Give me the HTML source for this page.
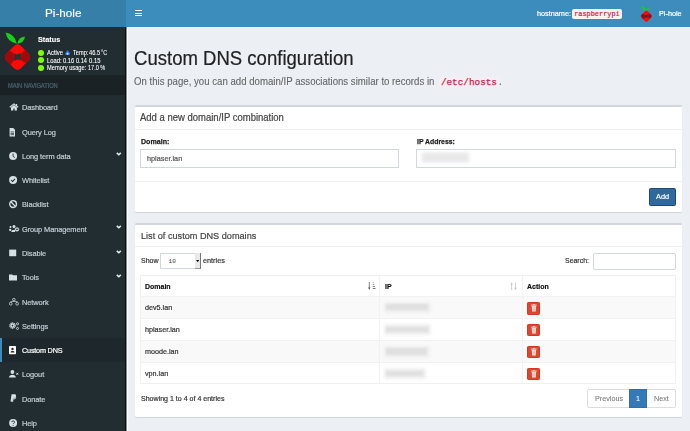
<!DOCTYPE html>
<html><head><meta charset="utf-8"><title>Custom DNS configuration</title>
<style>
html,body{margin:0;padding:0;width:690px;height:431px;overflow:hidden;background:#ecf0f5}
body{position:relative;font-family:"Liberation Sans",sans-serif}
.t{position:absolute;white-space:nowrap;-webkit-text-stroke:0.2px currentColor}
.r{position:absolute;display:block}
</style></head><body>
<div class="r" style="left:0.00px;top:0.00px;width:690.00px;height:431.00px;background:#ecf0f5;"></div>
<div class="r" style="left:0.00px;top:0.00px;width:126.00px;height:27.00px;background:#367fa9;"></div>
<div class="r" style="left:126.00px;top:0.00px;width:564.00px;height:27.00px;background:#3c8dbc;"></div>
<div class="t" style="left:44.60px;top:7.60px;font-size:10.6px;line-height:10.6px;color:#fff;transform:scaleX(1.1050);transform-origin:0 0;-webkit-text-stroke:0.15px currentColor;">Pi-hole</div>
<div class="r" style="left:134.80px;top:10.00px;width:7.40px;height:1.20px;background:#fff;"></div>
<div class="r" style="left:134.80px;top:12.60px;width:7.40px;height:1.20px;background:#fff;"></div>
<div class="r" style="left:134.80px;top:15.20px;width:7.40px;height:1.20px;background:#fff;"></div>
<div class="t" style="left:536.60px;top:9.83px;font-size:7.738px;line-height:7.738px;color:#fff;transform:scaleX(0.9434);transform-origin:0 0;">hostname:</div>
<div class="r" style="left:572.20px;top:9.30px;width:50.10px;height:9.30px;background:#f9f2f4;border-radius:2px;"></div>
<div class="t" style="left:574.20px;top:10.75px;font-size:6.9px;line-height:6.9px;color:#c7254e;font-family:'Liberation Mono', monospace;-webkit-text-stroke:0.2px currentColor;">raspberrypi</div>
<svg class="r" style="left:639.2px;top:4.3px;width:14.28px;height:18.48px" viewBox="0 0 34 44">
<path d="M5.6 4.6 Q 15.1 6.3 16.8 15.8 Q 7.3 14.1 5.6 4.6 Z" fill="#19cf19"/>
<path d="M25.0 8.5 Q 24.1 15.2 17.4 15.8 Q 18.3 9.1 25.0 8.5 Z" fill="#19cf19"/>
<rect x="7.27" y="18.87" width="20.46" height="20.46" rx="4.6" transform="rotate(45 17.5 29.1)" fill="#ff0808"/>
<clipPath id="cp639"><rect x="7.27" y="18.87" width="20.46" height="20.46" rx="4.6" transform="rotate(45 17.5 29.1)"/></clipPath>
<g clip-path="url(#cp639)">
<circle cx="9.0" cy="29.6" r="6.6" fill="#a00a0a"/>
<circle cx="26.0" cy="28.6" r="6.2" fill="#a00a0a"/>
<circle cx="17.5" cy="21.0" r="6.4" fill="#ff0808"/>
<circle cx="17.8" cy="37.4" r="6.4" fill="#ff0808"/>
<path d="M13.4 24.8 Q 17.5 28.0 21.6 24.6 Q 18.6 28.8 21.8 33.0 Q 17.6 29.8 13.6 33.4 Q 16.6 29.0 13.4 24.8 Z" fill="#263236"/>
</g></svg>
<div class="t" style="left:658.60px;top:9.83px;font-size:7.738px;line-height:7.738px;color:#fff;transform:scaleX(0.9434);transform-origin:0 0;">Pi-hole</div>
<div class="r" style="left:0.00px;top:27.00px;width:125.00px;height:404.00px;background:#222d32;"></div>
<div class="r" style="left:125.00px;top:27.00px;width:1.00px;height:404.00px;background:#0b0f11;"></div>
<div class="r" style="left:126.00px;top:27.00px;width:1.00px;height:404.00px;background:#858a8e;"></div>
<div class="r" style="left:127.00px;top:27.00px;width:1.00px;height:404.00px;background:#fbfcfd;"></div>
<svg class="r" style="left:0px;top:28px;width:34.0px;height:44.0px" viewBox="0 0 34 44">
<path d="M5.6 4.6 Q 15.1 6.3 16.8 15.8 Q 7.3 14.1 5.6 4.6 Z" fill="#19cf19"/>
<path d="M25.0 8.5 Q 24.1 15.2 17.4 15.8 Q 18.3 9.1 25.0 8.5 Z" fill="#19cf19"/>
<rect x="7.27" y="18.87" width="20.46" height="20.46" rx="4.6" transform="rotate(45 17.5 29.1)" fill="#ff0808"/>
<clipPath id="cp0"><rect x="7.27" y="18.87" width="20.46" height="20.46" rx="4.6" transform="rotate(45 17.5 29.1)"/></clipPath>
<g clip-path="url(#cp0)">
<circle cx="9.0" cy="29.6" r="6.6" fill="#a00a0a"/>
<circle cx="26.0" cy="28.6" r="6.2" fill="#a00a0a"/>
<circle cx="17.5" cy="21.0" r="6.4" fill="#ff0808"/>
<circle cx="17.8" cy="37.4" r="6.4" fill="#ff0808"/>
<path d="M13.4 24.8 Q 17.5 28.0 21.6 24.6 Q 18.6 28.8 21.8 33.0 Q 17.6 29.8 13.6 33.4 Q 16.6 29.0 13.4 24.8 Z" fill="#263236"/>
</g></svg>
<div class="t" style="left:37.60px;top:35.85px;font-size:8.1px;line-height:8.1px;color:#fff;font-weight:700;transform:scaleX(0.9029);transform-origin:0 0;-webkit-text-stroke:0.1px currentColor;">Status</div>
<div class="r" style="left:38.2px;top:49.80px;width:6.2px;height:6.2px;border-radius:50%;background:#7fff00"></div>
<div class="r" style="left:38.2px;top:57.20px;width:6.2px;height:6.2px;border-radius:50%;background:#7fff00"></div>
<div class="r" style="left:38.2px;top:64.70px;width:6.2px;height:6.2px;border-radius:50%;background:#7fff00"></div>
<svg class="r" style="left:64.8px;top:50.0px;width:5.2px;height:5.4px" viewBox="0 0 5.2 5.4"><path d="M2.6 0.2 C 3.6 1.6, 5 2.6, 5 3.6 A 2.4 1.9 0 0 1 0.2 3.6 C 0.2 2.6, 1.4 1.8, 2.6 0.2 Z" fill="#2e7bef"/><circle cx="2.6" cy="3.8" r="1.0" fill="#cfe2ff"/></svg>
<div class="t" style="left:46.80px;top:49.40px;font-size:7.0px;line-height:7.0px;color:#fff;transform:scaleX(0.8425);transform-origin:0 0;-webkit-text-stroke:0.08px currentColor;">Active</div>
<div class="t" style="left:72.90px;top:49.40px;font-size:7.0px;line-height:7.0px;color:#fff;transform:scaleX(0.8058);transform-origin:0 0;-webkit-text-stroke:0.08px currentColor;">Temp:</div>
<div class="t" style="left:89.00px;top:49.40px;font-size:7.0px;line-height:7.0px;color:#fff;transform:scaleX(0.8117);transform-origin:0 0;-webkit-text-stroke:0.08px currentColor;">46.5</div>
<div class="t" style="left:101.20px;top:49.40px;font-size:7.0px;line-height:7.0px;color:#fff;transform:scaleX(0.7838);transform-origin:0 0;-webkit-text-stroke:0.08px currentColor;">°C</div>
<div class="t" style="left:46.80px;top:56.80px;font-size:7.0px;line-height:7.0px;color:#fff;transform:scaleX(0.8362);transform-origin:0 0;-webkit-text-stroke:0.08px currentColor;">Load:</div>
<div class="t" style="left:63.30px;top:56.80px;font-size:7.0px;line-height:7.0px;color:#fff;transform:scaleX(0.8191);transform-origin:0 0;-webkit-text-stroke:0.08px currentColor;">0.16</div>
<div class="t" style="left:76.40px;top:56.80px;font-size:7.0px;line-height:7.0px;color:#fff;transform:scaleX(0.7971);transform-origin:0 0;-webkit-text-stroke:0.08px currentColor;">0.14</div>
<div class="t" style="left:89.10px;top:56.80px;font-size:7.0px;line-height:7.0px;color:#fff;transform:scaleX(0.8411);transform-origin:0 0;-webkit-text-stroke:0.08px currentColor;">0.15</div>
<div class="t" style="left:46.80px;top:64.30px;font-size:7.0px;line-height:7.0px;color:#fff;transform:scaleX(0.8137);transform-origin:0 0;-webkit-text-stroke:0.08px currentColor;">Memory usage:</div>
<div class="t" style="left:87.70px;top:64.30px;font-size:7.0px;line-height:7.0px;color:#fff;transform:scaleX(0.7873);transform-origin:0 0;-webkit-text-stroke:0.08px currentColor;">17.0 %</div>
<div class="r" style="left:0.00px;top:75.00px;width:125.00px;height:19.60px;background:#1a2226;"></div>
<div class="t" style="left:7.60px;top:82.80px;font-size:6.6px;line-height:6.6px;color:#4b646f;letter-spacing:-0.1px;transform:scaleX(0.8800);transform-origin:0 0;">MAIN NAVIGATION</div>
<div class="t" style="left:21.60px;top:104.40px;font-size:7.9px;line-height:7.9px;color:#bfcdd3;letter-spacing:-0.1px;transform:scaleX(0.9400);transform-origin:0 0;">Dashboard</div>
<div class="t" style="left:21.60px;top:128.67px;font-size:7.9px;line-height:7.9px;color:#bfcdd3;letter-spacing:-0.1px;transform:scaleX(0.9400);transform-origin:0 0;">Query Log</div>
<div class="t" style="left:21.60px;top:152.94px;font-size:7.9px;line-height:7.9px;color:#bfcdd3;letter-spacing:-0.1px;transform:scaleX(0.9400);transform-origin:0 0;">Long term data</div>
<svg class="r" style="left:116.0px;top:152.44px;width:5.6px;height:4px" viewBox="0 0 5.6 4"><path d="M0.8 0.9 L2.8 2.8 L4.8 0.9" stroke="#e6edf0" stroke-width="1.5" fill="none"/></svg>
<div class="t" style="left:21.60px;top:177.21px;font-size:7.9px;line-height:7.9px;color:#bfcdd3;letter-spacing:-0.1px;transform:scaleX(0.9400);transform-origin:0 0;">Whitelist</div>
<div class="t" style="left:21.60px;top:201.48px;font-size:7.9px;line-height:7.9px;color:#bfcdd3;letter-spacing:-0.1px;transform:scaleX(0.9400);transform-origin:0 0;">Blacklist</div>
<div class="t" style="left:21.60px;top:225.75px;font-size:7.9px;line-height:7.9px;color:#bfcdd3;letter-spacing:-0.1px;transform:scaleX(0.9400);transform-origin:0 0;">Group Management</div>
<svg class="r" style="left:116.0px;top:225.25px;width:5.6px;height:4px" viewBox="0 0 5.6 4"><path d="M0.8 0.9 L2.8 2.8 L4.8 0.9" stroke="#e6edf0" stroke-width="1.5" fill="none"/></svg>
<div class="t" style="left:21.60px;top:250.02px;font-size:7.9px;line-height:7.9px;color:#bfcdd3;letter-spacing:-0.1px;transform:scaleX(0.9400);transform-origin:0 0;">Disable</div>
<svg class="r" style="left:116.0px;top:249.52000000000004px;width:5.6px;height:4px" viewBox="0 0 5.6 4"><path d="M0.8 0.9 L2.8 2.8 L4.8 0.9" stroke="#e6edf0" stroke-width="1.5" fill="none"/></svg>
<div class="t" style="left:21.60px;top:274.29px;font-size:7.9px;line-height:7.9px;color:#bfcdd3;letter-spacing:-0.1px;transform:scaleX(0.9400);transform-origin:0 0;">Tools</div>
<svg class="r" style="left:116.0px;top:273.79px;width:5.6px;height:4px" viewBox="0 0 5.6 4"><path d="M0.8 0.9 L2.8 2.8 L4.8 0.9" stroke="#e6edf0" stroke-width="1.5" fill="none"/></svg>
<div class="t" style="left:21.60px;top:298.56px;font-size:7.9px;line-height:7.9px;color:#bfcdd3;letter-spacing:-0.1px;transform:scaleX(0.9400);transform-origin:0 0;">Network</div>
<div class="t" style="left:21.60px;top:322.83px;font-size:7.9px;line-height:7.9px;color:#bfcdd3;letter-spacing:-0.1px;transform:scaleX(0.9400);transform-origin:0 0;">Settings</div>
<div class="r" style="left:0.00px;top:338.20px;width:125.00px;height:24.27px;background:#1e282c;"></div>
<div class="r" style="left:0.00px;top:338.20px;width:2.00px;height:24.27px;background:#3c8dbc;"></div>
<div class="t" style="left:21.60px;top:347.10px;font-size:7.9px;line-height:7.9px;color:#fff;letter-spacing:-0.22px;transform:scaleX(0.9200);transform-origin:0 0;">Custom DNS</div>
<div class="t" style="left:21.60px;top:371.37px;font-size:7.9px;line-height:7.9px;color:#bfcdd3;letter-spacing:-0.1px;transform:scaleX(0.9400);transform-origin:0 0;">Logout</div>
<div class="t" style="left:21.60px;top:395.64px;font-size:7.9px;line-height:7.9px;color:#bfcdd3;letter-spacing:-0.1px;transform:scaleX(0.9400);transform-origin:0 0;">Donate</div>
<div class="t" style="left:21.60px;top:419.91px;font-size:7.9px;line-height:7.9px;color:#bfcdd3;letter-spacing:-0.1px;transform:scaleX(0.9400);transform-origin:0 0;">Help</div>
<svg class="r" style="left:8.8px;top:103.3px;width:10px;height:9px" viewBox="0 0 10 9"><path d="M0.8 4.3 L4.95 0.9 L9.1 4.3" stroke="#d6e0e5" stroke-width="1.1" fill="none"/><rect x="7.0" y="1.0" width="1.1" height="2.2" fill="#d6e0e5"/><path d="M2.0 4.5 L4.95 2.1 L7.9 4.5 V7.4 H5.6 V5.5 H4.3 V7.4 H2.0 Z" fill="#d6e0e5"/></svg>
<svg class="r" style="left:9.2px;top:127.67px;width:10px;height:9px" viewBox="0 0 10 9"><path d="M0.6 0 H4.2 L6 1.8 V8.4 H0.6 Z" fill="#d6e0e5"/><rect x="1.6" y="3.6" width="3.4" height="0.7" fill="#222d32"/><rect x="1.6" y="5.0" width="3.4" height="0.7" fill="#222d32"/><rect x="1.6" y="6.4" width="3.4" height="0.7" fill="#222d32"/></svg>
<svg class="r" style="left:9.0px;top:151.74px;width:10px;height:9px" viewBox="0 0 10 9"><circle cx="4.1" cy="4.1" r="4.0" fill="#d6e0e5"/><path d="M4.1 1.6 V4.3 L5.8 5.6" stroke="#222d32" stroke-width="0.9" fill="none"/></svg>
<svg class="r" style="left:9.0px;top:176.01000000000002px;width:10px;height:9px" viewBox="0 0 10 9"><circle cx="4.1" cy="4.1" r="4.0" fill="#d6e0e5"/><path d="M2.2 4.2 L3.6 5.5 L6.0 2.9" stroke="#222d32" stroke-width="1.1" fill="none"/></svg>
<svg class="r" style="left:9.0px;top:200.28000000000003px;width:10px;height:9px" viewBox="0 0 10 9"><circle cx="4.1" cy="4.1" r="3.4" stroke="#d6e0e5" stroke-width="1.3" fill="none"/><path d="M1.8 1.8 L6.4 6.4" stroke="#d6e0e5" stroke-width="1.3"/></svg>
<svg class="r" style="left:9.0px;top:224.95px;width:11px;height:8px" viewBox="0 0 11 8"><circle cx="1.5" cy="2.0" r="1.0" fill="#d6e0e5"/><ellipse cx="1.2" cy="4.9" rx="1.2" ry="1.1" fill="#d6e0e5"/><circle cx="5.0" cy="1.5" r="1.5" fill="#d6e0e5"/><path d="M2.2 7.0 C2.4 4.6 5.6 4.2 6.4 5.2 L6.0 7.0 Z" fill="#d6e0e5"/><circle cx="8.0" cy="4.4" r="1.35" fill="none" stroke="#d6e0e5" stroke-width="1.1"/><circle cx="8.0" cy="4.4" r="2.0" fill="none" stroke="#d6e0e5" stroke-width="0.5" stroke-dasharray="0.6 0.45"/></svg>
<svg class="r" style="left:9.0px;top:249.02000000000004px;width:10px;height:9px" viewBox="0 0 10 9"><rect x="0.2" y="0.6" width="7" height="6.6" fill="#d6e0e5"/></svg>
<svg class="r" style="left:9.0px;top:273.99px;width:10px;height:9px" viewBox="0 0 10 9"><path d="M0 0.4 H3.2 L4.0 1.2 H8 V6.4 H0 Z" fill="#d6e0e5"/></svg>
<svg class="r" style="left:9.0px;top:298.06px;width:10px;height:8px" viewBox="0 0 10 8"><rect x="3.7" y="0.5" width="2.4" height="2.2" rx="0.6" stroke="#d6e0e5" stroke-width="0.8" fill="none"/><rect x="0.5" y="4.4" width="2.5" height="2.6" rx="0.9" stroke="#d6e0e5" stroke-width="0.8" fill="none"/><rect x="6.9" y="4.4" width="2.5" height="2.6" rx="0.9" stroke="#d6e0e5" stroke-width="0.8" fill="none"/><path d="M4.9 2.7 V3.5 M1.75 4.4 V3.5 H8.15 V4.4" stroke="#d6e0e5" stroke-width="0.6" fill="none"/></svg>
<svg class="r" style="left:9.0px;top:322.03px;width:10px;height:8px" viewBox="0 0 10 8"><circle cx="3.5" cy="3.6" r="2.6" fill="none" stroke="#d6e0e5" stroke-width="1.3" stroke-dasharray="1.15 0.5"/><circle cx="3.5" cy="3.6" r="2.1" fill="#d6e0e5"/><circle cx="3.5" cy="3.6" r="0.85" fill="#222d32"/><circle cx="8.5" cy="1.8" r="1.05" fill="none" stroke="#d6e0e5" stroke-width="0.85"/><circle cx="8.5" cy="6.4" r="1.05" fill="none" stroke="#d6e0e5" stroke-width="0.85"/></svg>
<svg class="r" style="left:9.0px;top:345.49999999999994px;width:10px;height:9px" viewBox="0 0 10 9"><rect x="0" y="0" width="7" height="8.2" rx="0.8" fill="#fff"/><circle cx="3.5" cy="3" r="1.2" fill="#1e282c"/><path d="M1.5 6.4 C1.6 4.6 5.4 4.6 5.5 6.4 Z" fill="#1e282c"/></svg>
<svg class="r" style="left:9.0px;top:370.36999999999995px;width:10px;height:8px" viewBox="0 0 10 8"><circle cx="3.4" cy="2.0" r="1.9" fill="#d6e0e5"/><path d="M0 7.6 C0 3.9 6.8 3.9 6.8 7.6 Z" fill="#d6e0e5"/><path d="M7.3 2.8 L9.3 4.8 M9.3 2.8 L7.3 4.8" stroke="#d6e0e5" stroke-width="0.9"/></svg>
<svg class="r" style="left:9.6px;top:394.34000000000003px;width:8px;height:9px" viewBox="0 0 8 9"><path d="M1.6 0.2 H4.6 C6.4 0.2 6.6 2.6 5 3.6 C4.4 4 3.6 4 3.0 4 L2.5 7.6 H0.5 Z" fill="#d6e0e5"/><path d="M2.6 2 H4.6 C6.8 2 6.8 5.4 4.2 5.4 H3.5 L3.1 8 H1.6" fill="#d6e0e5" opacity="0.75"/></svg>
<svg class="r" style="left:9.0px;top:418.71000000000004px;width:10px;height:9px" viewBox="0 0 10 9"><circle cx="4.1" cy="4.1" r="4.0" fill="#d6e0e5"/><path d="M2.7 3.1 C2.7 1.5 5.6 1.5 5.6 3.1 C5.6 4.2 4.1 4.1 4.1 5.1" stroke="#222d32" stroke-width="0.9" fill="none"/><circle cx="4.1" cy="6.4" r="0.5" fill="#222d32"/></svg>
<div class="t" style="left:134.30px;top:48.87px;font-size:19.663px;line-height:19.663px;color:#222;transform:scaleX(0.9434);transform-origin:0 0;">Custom DNS configuration</div>
<div class="t" style="left:134.40px;top:77.29px;font-size:10.229px;line-height:10.229px;color:#666;transform:scaleX(0.9434);transform-origin:0 0;-webkit-text-stroke:0.1px currentColor;">On this page, you can add domain/IP associations similar to records in</div>
<div class="r" style="left:439.30px;top:76.60px;width:59.30px;height:10.60px;background:#f5eef2;border-radius:2px;"></div>
<div class="t" style="left:440.90px;top:77.92px;font-size:9.35px;line-height:9.35px;color:#c7254e;font-family:'Liberation Mono', monospace;-webkit-text-stroke:0.25px currentColor;">/etc/hosts</div>
<div class="t" style="left:499.30px;top:77.29px;font-size:10.229px;line-height:10.229px;color:#666;transform:scaleX(0.9434);transform-origin:0 0;">.</div>
<div class="r" style="left:134.70px;top:105.00px;width:547.00px;height:106.50px;background:#fff;box-shadow:0 0.6px 0.8px rgba(0,0,0,0.12);border-radius:1.5px;"></div>
<div class="r" style="left:134.70px;top:105.00px;width:547.00px;height:2.00px;background:#d2d6de;border-radius:1.5px 1.5px 0 0;"></div>
<div class="t" style="left:140.20px;top:113.17px;font-size:10.07px;line-height:10.07px;color:#444;transform:scaleX(0.9434);transform-origin:0 0;">Add a new domain/IP combination</div>
<div class="r" style="left:134.70px;top:128.80px;width:547.00px;height:0.80px;background:#f0f0f0;"></div>
<div class="t" style="left:140.90px;top:138.14px;font-size:7.526px;line-height:7.526px;color:#222;font-weight:700;transform:scaleX(0.9434);transform-origin:0 0;-webkit-text-stroke:0.25px currentColor;">Domain:</div>
<div class="r" style="left:140.20px;top:149.10px;width:259.10px;height:18.60px;background:#fff;box-sizing:border-box;border:0.8px solid #d2d6de;"></div>
<div class="t" style="left:147.40px;top:154.93px;font-size:7.738px;line-height:7.738px;color:#555;transform:scaleX(0.9434);transform-origin:0 0;">hplaser.lan</div>
<div class="t" style="left:416.60px;top:138.24px;font-size:7.314px;line-height:7.314px;color:#222;font-weight:700;transform:scaleX(0.9434);transform-origin:0 0;-webkit-text-stroke:0.25px currentColor;">IP Address:</div>
<div class="r" style="left:416.40px;top:149.10px;width:259.60px;height:18.60px;background:#fff;box-sizing:border-box;border:0.8px solid #d2d6de;"></div>
<div class="r" style="left:421.00px;top:151.60px;width:48.50px;height:11.40px;background:#f0f0f0;filter:blur(1.5px);border-radius:3px;"></div>
<div class="r" style="left:423.50px;top:154.00px;width:43.00px;height:6.50px;background:#e8e8e8;filter:blur(1.0px);"></div>
<div class="r" style="left:134.70px;top:181.00px;width:547.00px;height:0.80px;background:#f0f0f0;"></div>
<div class="r" style="left:649.30px;top:187.70px;width:26.70px;height:18.20px;background:#2e6a9f;box-sizing:border-box;border:0.8px solid #1f4a70;border-radius:1.5px;"></div>
<div class="t" style="left:655.80px;top:193.48px;font-size:7.844px;line-height:7.844px;color:#fff;transform:scaleX(0.9434);transform-origin:0 0;">Add</div>
<div class="r" style="left:134.70px;top:222.50px;width:547.00px;height:194.00px;background:#fff;box-shadow:0 0.6px 0.8px rgba(0,0,0,0.12);border-radius:1.5px;"></div>
<div class="r" style="left:134.70px;top:222.50px;width:547.00px;height:2.00px;background:#d2d6de;border-radius:1.5px 1.5px 0 0;"></div>
<div class="t" style="left:140.50px;top:230.55px;font-size:9.699px;line-height:9.699px;color:#444;transform:scaleX(0.9434);transform-origin:0 0;">List of custom DNS domains</div>
<div class="r" style="left:134.70px;top:246.00px;width:547.00px;height:0.80px;background:#f0f0f0;"></div>
<div class="t" style="left:140.50px;top:257.39px;font-size:7.42px;line-height:7.42px;color:#333;transform:scaleX(0.9434);transform-origin:0 0;">Show</div>
<div class="r" style="left:160.20px;top:252.70px;width:40.40px;height:16.30px;background:#fff;box-sizing:border-box;border:0.8px solid #d2d6de;"></div>
<div class="r" style="left:195.00px;top:253.30px;width:5.60px;height:15.70px;background:#e9e9e9;box-sizing:border-box;border-right:0.8px solid #777;border-bottom:0.8px solid #999;"></div>
<svg class="r" style="left:196.0px;top:259.6px;width:3.4px;height:2.4px" viewBox="0 0 3.4 2.4"><path d="M0 0 H3.4 L1.7 2.2 Z" fill="#111"/></svg>
<div class="t" style="left:168.60px;top:259.35px;font-size:6.1px;line-height:6.1px;color:#3a3a3a;font-family:'Liberation Mono', monospace;-webkit-text-stroke:0;">10</div>
<div class="t" style="left:202.50px;top:257.23px;font-size:7.738px;line-height:7.738px;color:#333;transform:scaleX(0.9434);transform-origin:0 0;">entries</div>
<div class="t" style="left:565.10px;top:257.32px;font-size:7.367px;line-height:7.367px;color:#333;transform:scaleX(0.9434);transform-origin:0 0;">Search:</div>
<div class="r" style="left:592.70px;top:252.50px;width:83.30px;height:17.00px;background:#fff;box-sizing:border-box;border:0.8px solid #d2d6de;border-radius:2px;"></div>
<div class="r" style="left:140.20px;top:275.20px;width:535.60px;height:109.00px;background:#fff;box-sizing:border-box;border:0.8px solid #f0f0f0;"></div>
<div class="r" style="left:141.00px;top:296.30px;width:534.00px;height:22.40px;background:#f9f9f9;"></div>
<div class="r" style="left:141.00px;top:340.80px;width:534.00px;height:21.90px;background:#f9f9f9;"></div>
<div class="r" style="left:140.20px;top:295.90px;width:535.60px;height:0.80px;background:#f2f2f2;"></div>
<div class="r" style="left:140.20px;top:318.30px;width:535.60px;height:0.80px;background:#f2f2f2;"></div>
<div class="r" style="left:140.20px;top:340.40px;width:535.60px;height:0.80px;background:#f2f2f2;"></div>
<div class="r" style="left:140.20px;top:362.30px;width:535.60px;height:0.80px;background:#f2f2f2;"></div>
<div class="r" style="left:379.00px;top:275.20px;width:0.80px;height:109.00px;background:#f2f2f2;"></div>
<div class="r" style="left:522.20px;top:275.20px;width:0.80px;height:109.00px;background:#f2f2f2;"></div>
<div class="t" style="left:145.40px;top:283.39px;font-size:7.42px;line-height:7.42px;color:#111;font-weight:700;transform:scaleX(0.9434);transform-origin:0 0;">Domain</div>
<div class="t" style="left:384.60px;top:283.39px;font-size:7.42px;line-height:7.42px;color:#111;font-weight:700;transform:scaleX(0.9434);transform-origin:0 0;">IP</div>
<div class="t" style="left:526.80px;top:283.39px;font-size:7.42px;line-height:7.42px;color:#111;font-weight:700;transform:scaleX(0.9434);transform-origin:0 0;">Action</div>
<svg class="r" style="left:368.3px;top:281.6px;width:8px;height:8.4px" viewBox="0 0 8 8.4"><path d="M1.3 0 V6.8" stroke="#555" stroke-width="0.75"/><path d="M0.2 5.6 L1.3 7.9 L2.4 5.6 Z" fill="#555"/><rect x="4.7" y="0.4" width="0.9" height="0.75" fill="#777"/><rect x="4.7" y="2.3" width="1.5" height="0.75" fill="#666"/><rect x="4.7" y="4.2" width="2.1" height="0.75" fill="#555"/><rect x="4.7" y="6.1" width="2.8" height="0.8" fill="#555"/></svg>
<svg class="r" style="left:510.4px;top:281.5px;width:8px;height:8.4px" viewBox="0 0 8 8.4"><path d="M1.6 1 V8" stroke="#c8c8c8" stroke-width="0.9"/><path d="M0.3 2.6 L1.6 0.2 L2.9 2.6 Z" fill="#c8c8c8"/><path d="M5.6 0.4 V7.4" stroke="#c8c8c8" stroke-width="0.9"/><path d="M4.3 5.8 L5.6 8.2 L6.9 5.8 Z" fill="#c8c8c8"/></svg>
<div class="t" style="left:145.30px;top:304.18px;font-size:7.632px;line-height:7.632px;color:#333;transform:scaleX(0.9434);transform-origin:0 0;">dev5.lan</div>
<div class="r" style="left:383.50px;top:301.80px;width:47.00px;height:11.40px;background:#efefef;filter:blur(1.6px);border-radius:3px;"></div>
<div class="r" style="left:385.50px;top:304.40px;width:42.00px;height:6.00px;background:#e0e0e0;filter:blur(1.1px);"></div>
<div class="r" style="left:527.00px;top:302.20px;width:13.20px;height:12.40px;background:#e0452f;box-sizing:border-box;border:0.7px solid #d33a26;border-radius:1.2px;"></div>
<svg class="r" style="left:530.8px;top:304.2px;width:5.8px;height:8px" viewBox="0 0 5.8 8"><rect x="0.2" y="0.6" width="5.4" height="1" fill="#fbe3df"/><rect x="2" y="0" width="1.8" height="0.8" fill="#fbe3df"/><path d="M0.7 1.9 H5.1 L4.7 7.6 H1.1 Z" fill="#fbe3df"/><path d="M2.1 2.8 V6.8 M3.7 2.8 V6.8" stroke="#e87e70" stroke-width="0.45"/></svg>
<div class="t" style="left:145.30px;top:326.08px;font-size:7.632px;line-height:7.632px;color:#333;transform:scaleX(0.9434);transform-origin:0 0;">hplaser.lan</div>
<div class="r" style="left:383.50px;top:324.20px;width:47.00px;height:11.00px;background:#efefef;filter:blur(1.6px);border-radius:3px;"></div>
<div class="r" style="left:385.50px;top:326.80px;width:42.00px;height:5.60px;background:#e0e0e0;filter:blur(1.1px);"></div>
<div class="r" style="left:527.00px;top:324.10px;width:13.20px;height:12.40px;background:#e0452f;box-sizing:border-box;border:0.7px solid #d33a26;border-radius:1.2px;"></div>
<svg class="r" style="left:530.8px;top:326.09999999999997px;width:5.8px;height:8px" viewBox="0 0 5.8 8"><rect x="0.2" y="0.6" width="5.4" height="1" fill="#fbe3df"/><rect x="2" y="0" width="1.8" height="0.8" fill="#fbe3df"/><path d="M0.7 1.9 H5.1 L4.7 7.6 H1.1 Z" fill="#fbe3df"/><path d="M2.1 2.8 V6.8 M3.7 2.8 V6.8" stroke="#e87e70" stroke-width="0.45"/></svg>
<div class="t" style="left:145.30px;top:347.98px;font-size:7.632px;line-height:7.632px;color:#333;transform:scaleX(0.9434);transform-origin:0 0;">moode.lan</div>
<div class="r" style="left:383.50px;top:345.80px;width:46.50px;height:12.40px;background:#efefef;filter:blur(1.6px);border-radius:3px;"></div>
<div class="r" style="left:385.50px;top:348.40px;width:41.50px;height:7.00px;background:#e0e0e0;filter:blur(1.1px);"></div>
<div class="r" style="left:527.00px;top:346.00px;width:13.20px;height:12.40px;background:#e0452f;box-sizing:border-box;border:0.7px solid #d33a26;border-radius:1.2px;"></div>
<svg class="r" style="left:530.8px;top:348.0px;width:5.8px;height:8px" viewBox="0 0 5.8 8"><rect x="0.2" y="0.6" width="5.4" height="1" fill="#fbe3df"/><rect x="2" y="0" width="1.8" height="0.8" fill="#fbe3df"/><path d="M0.7 1.9 H5.1 L4.7 7.6 H1.1 Z" fill="#fbe3df"/><path d="M2.1 2.8 V6.8 M3.7 2.8 V6.8" stroke="#e87e70" stroke-width="0.45"/></svg>
<div class="t" style="left:145.30px;top:369.88px;font-size:7.632px;line-height:7.632px;color:#333;transform:scaleX(0.9434);transform-origin:0 0;">vpn.lan</div>
<div class="r" style="left:383.50px;top:368.00px;width:42.00px;height:11.00px;background:#efefef;filter:blur(1.6px);border-radius:3px;"></div>
<div class="r" style="left:385.50px;top:370.60px;width:37.00px;height:5.60px;background:#e0e0e0;filter:blur(1.1px);"></div>
<div class="r" style="left:527.00px;top:367.90px;width:13.20px;height:12.40px;background:#e0452f;box-sizing:border-box;border:0.7px solid #d33a26;border-radius:1.2px;"></div>
<svg class="r" style="left:530.8px;top:369.9px;width:5.8px;height:8px" viewBox="0 0 5.8 8"><rect x="0.2" y="0.6" width="5.4" height="1" fill="#fbe3df"/><rect x="2" y="0" width="1.8" height="0.8" fill="#fbe3df"/><path d="M0.7 1.9 H5.1 L4.7 7.6 H1.1 Z" fill="#fbe3df"/><path d="M2.1 2.8 V6.8 M3.7 2.8 V6.8" stroke="#e87e70" stroke-width="0.45"/></svg>
<div class="t" style="left:140.50px;top:395.26px;font-size:7.473px;line-height:7.473px;color:#333;transform:scaleX(0.9434);transform-origin:0 0;">Showing 1 to 4 of 4 entries</div>
<div class="r" style="left:586.70px;top:389.20px;width:89.00px;height:18.40px;background:#fff;box-sizing:border-box;border:0.8px solid #ddd;border-radius:2px;"></div>
<div class="r" style="left:628.90px;top:389.20px;width:18.40px;height:18.40px;background:#337ab7;box-sizing:border-box;border:0.8px solid #2d70aa;"></div>
<div class="t" style="left:594.70px;top:395.08px;font-size:7.632px;line-height:7.632px;color:#777;transform:scaleX(0.9434);transform-origin:0 0;-webkit-text-stroke:0.05px currentColor;">Previous</div>
<div class="t" style="left:635.60px;top:395.08px;font-size:7.632px;line-height:7.632px;color:#fff;transform:scaleX(0.9434);transform-origin:0 0;-webkit-text-stroke:0.05px currentColor;">1</div>
<div class="t" style="left:654.00px;top:395.08px;font-size:7.632px;line-height:7.632px;color:#777;transform:scaleX(0.9434);transform-origin:0 0;-webkit-text-stroke:0.05px currentColor;">Next</div>
</body></html>
